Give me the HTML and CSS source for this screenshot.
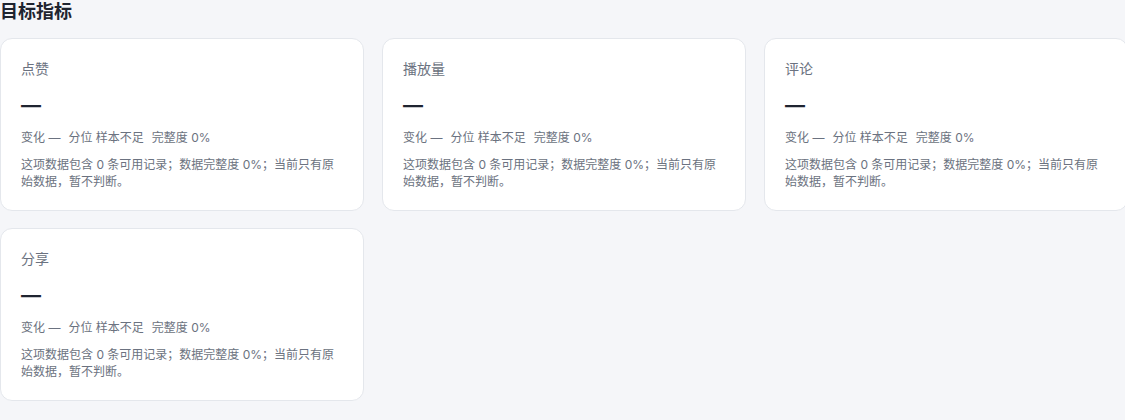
FILE: index.html
```html
<!DOCTYPE html>
<html lang="zh-CN">
<head>
<meta charset="utf-8">
<title>目标指标</title>
<link rel="stylesheet" href="styles.css">
</head>
<body>
<section class="section">
  <h2 class="section-title">目标指标</h2>
  <div class="grid">
    <div class="card">
      <div class="card-title">点赞</div>
      <div class="card-value">—</div>
      <div class="card-stats"><span>变化 —</span><span>分位 样本不足</span><span>完整度 0%</span></div>
      <p class="card-desc">这项数据包含 0 条可用记录；数据完整度 0%；当前只有原始数据，暂不判断。</p>
    </div>
    <div class="card">
      <div class="card-title">播放量</div>
      <div class="card-value">—</div>
      <div class="card-stats"><span>变化 —</span><span>分位 样本不足</span><span>完整度 0%</span></div>
      <p class="card-desc">这项数据包含 0 条可用记录；数据完整度 0%；当前只有原始数据，暂不判断。</p>
    </div>
    <div class="card">
      <div class="card-title">评论</div>
      <div class="card-value">—</div>
      <div class="card-stats"><span>变化 —</span><span>分位 样本不足</span><span>完整度 0%</span></div>
      <p class="card-desc">这项数据包含 0 条可用记录；数据完整度 0%；当前只有原始数据，暂不判断。</p>
    </div>
    <div class="card">
      <div class="card-title">分享</div>
      <div class="card-value">—</div>
      <div class="card-stats"><span>变化 —</span><span>分位 样本不足</span><span>完整度 0%</span></div>
      <p class="card-desc">这项数据包含 0 条可用记录；数据完整度 0%；当前只有原始数据，暂不判断。</p>
    </div>
  </div>
</section>
</body>
</html>
```

FILE: styles.css
```css
html, body {
  margin: 0;
  padding: 0;
  background: #f5f6f9;
  overflow: hidden;
}
body {
  font-family: "Inter", "Noto Sans", "Noto Sans CJK SC", sans-serif;
  color: #1f2430;
}
.section-title {
  margin: 0 0 14px 0;
  font-size: 18px;
  line-height: 24px;
  font-weight: 700;
  color: #1f2430;
}
.grid {
  display: grid;
  grid-template-columns: repeat(3, 364px);
  gap: 17px 18px;
}
.card {
  background: #ffffff;
  border: 1px solid #e4e7ec;
  border-radius: 12px;
  padding: 20px;
}
.card-title {
  font-size: 14px;
  line-height: 20px;
  color: #6b7280;
}
.card-value {
  margin-top: 12px;
  font-size: 20px;
  line-height: 28px;
  font-weight: 700;
  color: #1f2430;
}
.card-stats {
  margin-top: 10px;
  display: flex;
  gap: 8px;
  font-size: 12px;
  line-height: 18px;
  color: #6b7280;
}
.card-desc {
  margin: 9px 0 0 0;
  font-size: 12px;
  line-height: 17px;
  color: #6b7280;
}
```
